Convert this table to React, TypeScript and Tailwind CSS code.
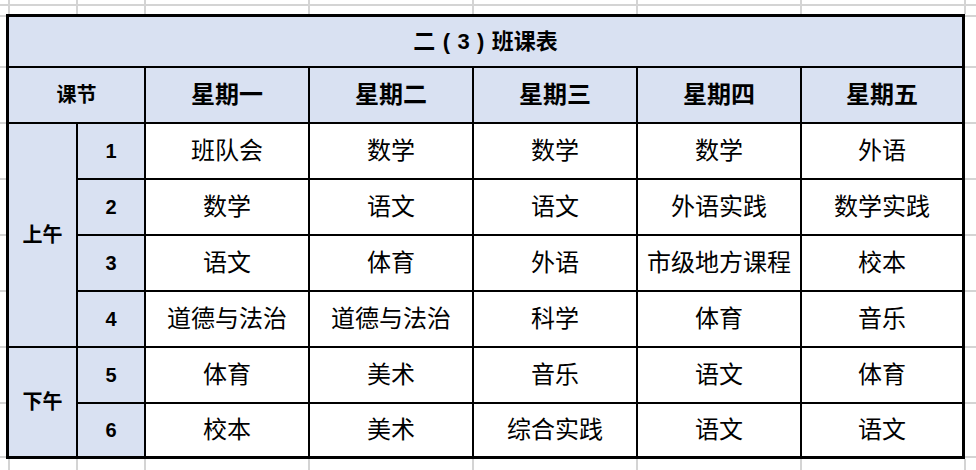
const days = ["星期一", "星期二", "星期三", "星期四", "星期五"]

const rows = [
  ["班队会", "数学", "数学", "数学", "外语"],
  ["数学", "语文", "语文", "外语实践", "数学实践"],
  ["语文", "体育", "外语", "市级地方课程", "校本"],
  ["道德与法治", "道德与法治", "科学", "体育", "音乐"],
  ["体育", "美术", "音乐", "语文", "体育"],
  ["校本", "美术", "综合实践", "语文", "语文"],
]

// widths of the sheet columns between grey gridlines
const colWidths = [8, 66, 66, 162, 162, 162, 162, 162, 10]

function VLines({ h }: { h: string }) {
  return (
    <div className={`flex ${h}`}>
      {colWidths.map((w, i) => (
        <div key={i} className="flex shrink-0">
          <div style={{ width: w }} />
          {i < colWidths.length - 1 && <div className="w-[2px] bg-[#d4d4d4]" />}
        </div>
      ))}
    </div>
  )
}

function Gutter({ w }: { w: string }) {
  const gaps = [1, 49, 54, 54, 54, 54, 54, 54, 52]
  return (
    <div className={`flex flex-col shrink-0 ${w}`}>
      {gaps.map((g, i) => (
        <div key={i}>
          <div style={{ height: g }} />
          <div className="h-[2px] bg-[#d4d4d4]" />
        </div>
      ))}
    </div>
  )
}

const cell = "flex items-center justify-center"
const side = "bg-[#d9e1f2] font-bold"

export default function App() {
  return (
    <div className="w-[976px] h-[470px] bg-white overflow-hidden font-['Liberation_Sans','Noto_Sans_CJK_SC',sans-serif] text-black">
      <div className="flex flex-col h-[14px]">
        <VLines h="h-[4px]" />
        <div className="h-[2px] bg-[#d4d4d4]" />
        <VLines h="h-[8px]" />
      </div>

      <div className="flex">
        <Gutter w="w-[6px]" />
        <div className="w-[959px] shrink-0 border-[3px] border-black bg-black grid grid-cols-[67px_66px_162px_162px_162px_162px_160px] grid-rows-[49px_54px_54px_54px_54px_54px_54px_52px] gap-[2px]">
          <div className={`${cell} ${side} col-span-7 text-[22px]`}>
            <span>二</span>
            <span className="w-[22px] text-center">(</span>
            <span>3</span>
            <span className="w-[22px] text-center">)</span>
            <span>班课表</span>
          </div>

          <div className={`${cell} ${side} col-span-2 text-[20px]`}>课节</div>
          {days.map((d) => (
            <div key={d} className={`${cell} ${side} text-[24px]`}>
              {d}
            </div>
          ))}

          {rows.map((r, i) => (
            <>
              {i === 0 && <div className={`${cell} ${side} row-span-4 text-[20px]`}>上午</div>}
              {i === 4 && <div className={`${cell} ${side} row-span-2 text-[20px]`}>下午</div>}
              <div key={"n" + i} className={`${cell} ${side} text-[20px]`}>
                {i + 1}
              </div>
              {r.map((s, j) => (
                <div key={i + "-" + j} className={`${cell} bg-white text-[24px]`}>
                  {s}
                </div>
              ))}
            </>
          ))}
        </div>
        <Gutter w="w-[11px]" />
      </div>

      <VLines h="h-[11px]" />
    </div>
  )
}
